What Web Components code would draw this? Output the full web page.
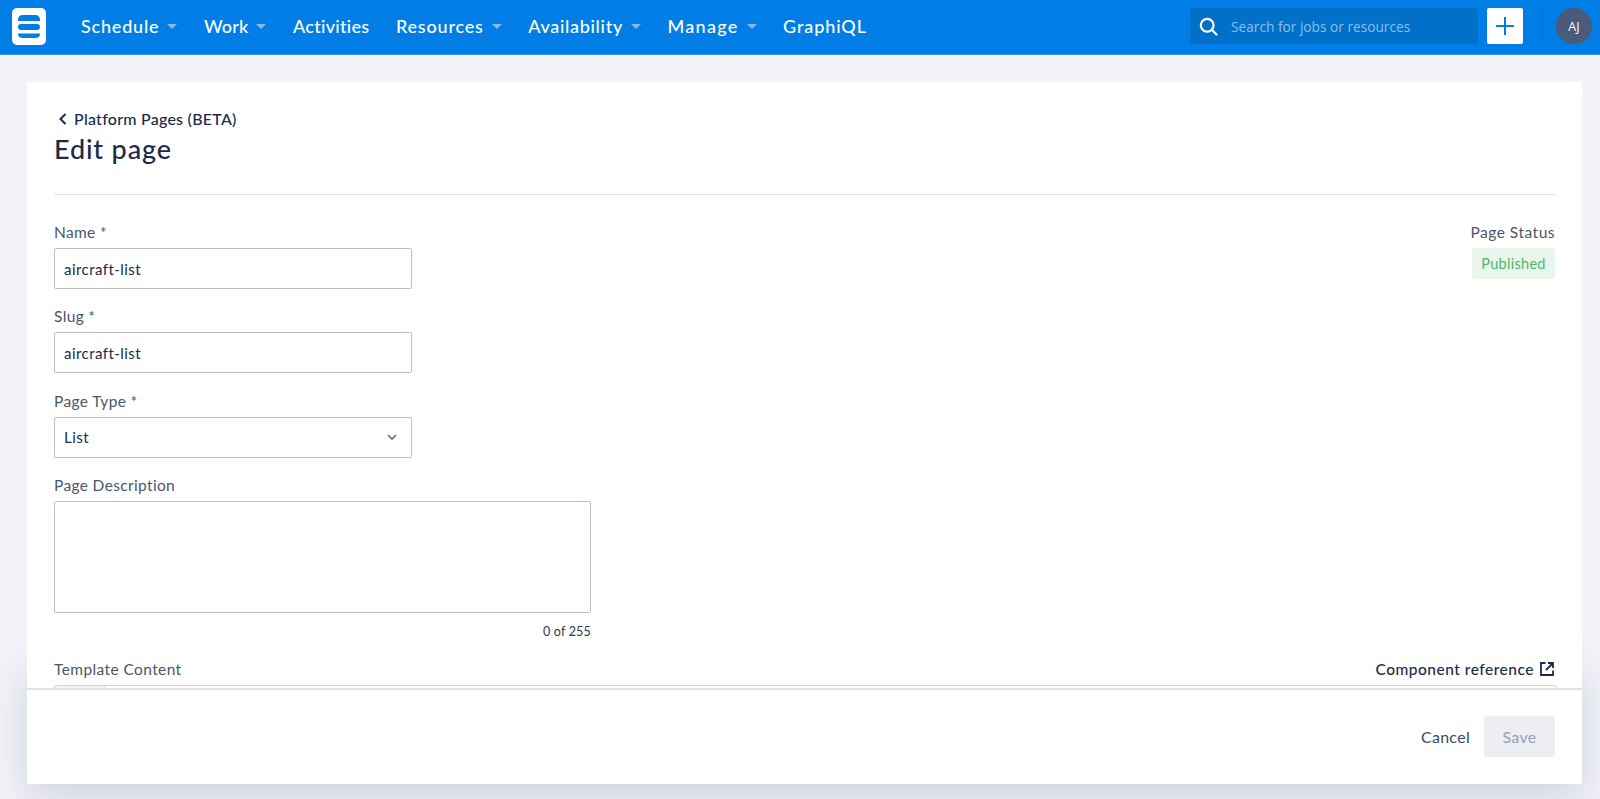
<!DOCTYPE html>
<html><head><meta charset="utf-8"><title>Edit page</title>
<style>
html,body{margin:0;height:100%;overflow:hidden}
body{background:#f2f4f9;font-family:Lato,"Liberation Sans",sans-serif;display:flex;flex-direction:column;height:799px}
</style></head><body>
<app-nav></app-nav>
<page-card>
  <page-header slot="head" back="Platform Pages (BETA)" title="Edit page"></page-header>
  <div slot="left">
    <form-field label="Name *" value="aircraft-list"></form-field>
    <form-field label="Slug *" value="aircraft-list"></form-field>
    <form-field label="Page Type *" value="List" select></form-field>
    <text-area label="Page Description" count="0 of 255"></text-area>
  </div>
  <status-badge slot="right" label="Page Status" text="Published"></status-badge>
  <code-editor slot="tail" label="Template Content" link="Component reference"></code-editor>
  <page-footer slot="foot"></page-footer>
</page-card>
<script>
function def(name, render){
  customElements.define(name, class extends HTMLElement{
    connectedCallback(){
      if(this.shadowRoot) return;
      this.attachShadow({mode:'open'}).innerHTML = render(this);
    }
  });
}
const a=(e,n)=>e.getAttribute(n)||'';
const item=(t,caret,ls)=>`<a style="letter-spacing:${ls}px">${t}${caret?'<i></i>':''}</a>`;
def('app-nav',()=>`<style>
:host{display:flex;flex:none;align-items:center;height:52px;background:#007ee5;border-bottom:1px solid #2f96ec;box-sizing:content-box;padding:0 8px 2px 12px;color:#fff}
svg.logo{width:34px;height:37px;flex:none;margin-right:35px}
nav{display:flex;align-items:center;gap:26.5px;flex:1;font-size:18px;font-weight:500}
a{display:flex;align-items:center;white-space:nowrap}
i{width:0;height:0;border-left:5.5px solid transparent;border-right:5.5px solid transparent;border-top:5.5px solid #86b9ee;margin-left:8px}
.search{width:288px;height:36px;background:#0070c9;border-radius:2px;display:flex;align-items:center;box-sizing:border-box;padding-left:9px;gap:13px;font:13.7px "Open Sans",sans-serif;color:#8fbfec}
.search svg{width:19px;height:19px;flex:none}
.plus{width:36px;height:36px;background:#fff;border-radius:2px;margin-left:9px;display:flex;align-items:center;justify-content:center}
.sep{width:1px;height:36px;background:#0070c9;margin:0 14px 0 18px}
.av{width:36px;height:36px;border-radius:50%;background:#4a5a78;font:500 12.5px "Open Sans",sans-serif;display:flex;align-items:center;justify-content:center}
</style>
<svg class="logo" viewBox="0 0 34 37"><rect width="34" height="37" rx="5" fill="#fff"/><path d="M6 11.5C6 9 8 7 10.5 7H23.5C26 7 28 9 28 11.5V13H6ZM8.5 16H25.5C27 16 28 17.5 28 19C28 20.5 27 22 25.5 22H8.5C7 22 6 20.5 6 19C6 17.5 7 16 8.5 16ZM6 25.5H28V26C28 28.5 26 30 23.5 30H10.5C8 30 6 28.5 6 26Z" fill="#007ee5"/></svg>
<nav>${item('Schedule',1,.8)}${item('Work',1,.2)}${item('Activities',0,.3)}${item('Resources',1,.8)}${item('Availability',1,.7)}${item('Manage',1,1.3)}${item('GraphiQL',0,.9)}</nav>
<div class="search"><svg viewBox="0 0 19 19" fill="none" stroke="#fff" stroke-width="2.2" stroke-linecap="round"><circle cx="8.2" cy="8.2" r="6.4"/><path d="M13 13l4.5 4.5"/></svg><span>Search for jobs or resources</span></div>
<div class="plus"><svg width="18" height="18" viewBox="0 0 18 18" stroke="#007ee5" stroke-width="2"><path d="M9 0v18M0 9h18"/></svg></div>
<div class="sep"></div>
<div class="av">AJ</div>`);
def('page-card',()=>`<style>
:host{display:flex;flex-direction:column;height:702px;margin:27px 18px 0 27px;background:#fff;border-radius:3px;font-size:15px;position:relative}
:host::before{content:"";position:absolute;left:8px;right:8px;bottom:0;height:110px;z-index:-1;box-shadow:0 6px 44px 8px rgba(40,50,80,.17)}
.scroll{flex:1;min-height:0;overflow:hidden;padding:0 27px 0 27px}
.cols{display:flex;justify-content:space-between;align-items:flex-start}
</style>
<div class="scroll"><slot name="head"></slot><div class="cols"><slot name="left"></slot><slot name="right"></slot></div><slot name="tail"></slot></div>
<slot name="foot"></slot>`);
def('page-header',e=>`<style>
:host{display:block;padding-top:27px;height:85px;border-bottom:1px solid #dde1ec;margin-bottom:27px;color:#1b2a4a}
.b{display:flex;align-items:center;font-size:16px;font-weight:500;line-height:20px;letter-spacing:.25px}
svg{margin:0 7px 0 5px}
h1{margin:2px 0 0;font-size:27px;line-height:36px;font-weight:500;letter-spacing:.85px}
</style><div class="b"><svg width="8" height="12" viewBox="0 0 8 12" fill="none" stroke="#1b2a4a" stroke-width="2"><path d="M6.5 1L1.5 6l5 5"/></svg>${a(e,'back')}</div><h1>${a(e,'title')}</h1>`);
const chev=`<svg width="10" height="6" viewBox="0 0 10 6" fill="none" stroke="#5a6680" stroke-width="1.6"><path d="M1 1l4 4 4-4"/></svg>`;
def('form-field',e=>`<style>
:host{display:block;width:358px;height:84.3px;color:#4a556e}
label{display:block;font-size:15.5px;line-height:20px;margin-bottom:6px;letter-spacing:.35px}
.i{height:41px;box-sizing:border-box;border:1px solid #b9c0d2;border-radius:2px;display:flex;align-items:center;justify-content:space-between;padding:0 14px 0 9px;font-size:15px;color:#1b2a4a;letter-spacing:.45px}
</style><label>${a(e,'label')}</label><div class="i"><span>${a(e,'value')}</span>${e.hasAttribute('select')?chev:''}</div>`);
def('text-area',e=>`<style>
:host{display:block;width:537px;color:#4a556e}
label{display:block;font-size:15.5px;line-height:20px;margin-bottom:6px;letter-spacing:.35px}
.t{height:112px;box-sizing:border-box;border:1px solid #b9c0d2;border-radius:2px}
.c{text-align:right;font-size:12.5px;line-height:16px;margin-top:11px;color:#2c3854;letter-spacing:.2px}
</style><label>${a(e,'label')}</label><div class="t"></div><div class="c">${a(e,'count')}</div>`);
def('status-badge',e=>`<style>
:host{display:flex;flex-direction:column;align-items:flex-end;color:#4a556e}
.l{font-size:15.5px;line-height:20px;margin-bottom:6px;letter-spacing:.5px}
.b{height:31px;width:83px;display:flex;align-items:center;justify-content:center;background:#e8f6ec;border-radius:2px;color:#4cb96e;font-size:14.5px;letter-spacing:.3px}
</style><div class="l">${a(e,'label')}</div><div class="b">${a(e,'text')}</div>`);
def('code-editor',e=>`<style>
:host{display:block;margin-top:19px;color:#4a556e}
.h{display:flex;justify-content:space-between;align-items:center;line-height:20px;font-size:15.5px;letter-spacing:.4px;margin-bottom:6px;padding-right:1px}
.r{display:flex;align-items:center;gap:6px;color:#1b2a4a;font-weight:500;font-size:15.5px;letter-spacing:.5px}
.e{height:60px;margin-right:-2px;border:1px solid #cdd3e0;border-radius:2px;display:flex}
.g{width:50px;background:#f2f4f9;border-right:1px solid #cdd3e0}
</style><div class="h"><span>${a(e,'label')}</span><span class="r">${a(e,'link')}<svg width="14" height="14" viewBox="0 0 14 14" fill="none" stroke="#1b2a4a" stroke-width="1.8"><path d="M5.5 1H1v12h12V8.5M8 1h5v5M13 1L6 8"/></svg></span></div><div class="e"><div class="g"></div></div>`);
def('page-footer',()=>`<style>
:host{display:flex;flex:none;height:93px;border-top:2px solid #dfe3ec;justify-content:flex-end;align-items:center;padding:0 27px 1px 0;gap:14px;background:#fff;font-size:16px;box-sizing:content-box;border-radius:0 0 3px 3px;letter-spacing:.3px}
.c{color:#3b4763}
.s{width:71px;height:41px;background:#eceef4;border-radius:3px;color:#98a0b4;display:flex;align-items:center;justify-content:center}
</style><span class="c">Cancel</span><span class="s">Save</span>`);
</script>
</body></html>
